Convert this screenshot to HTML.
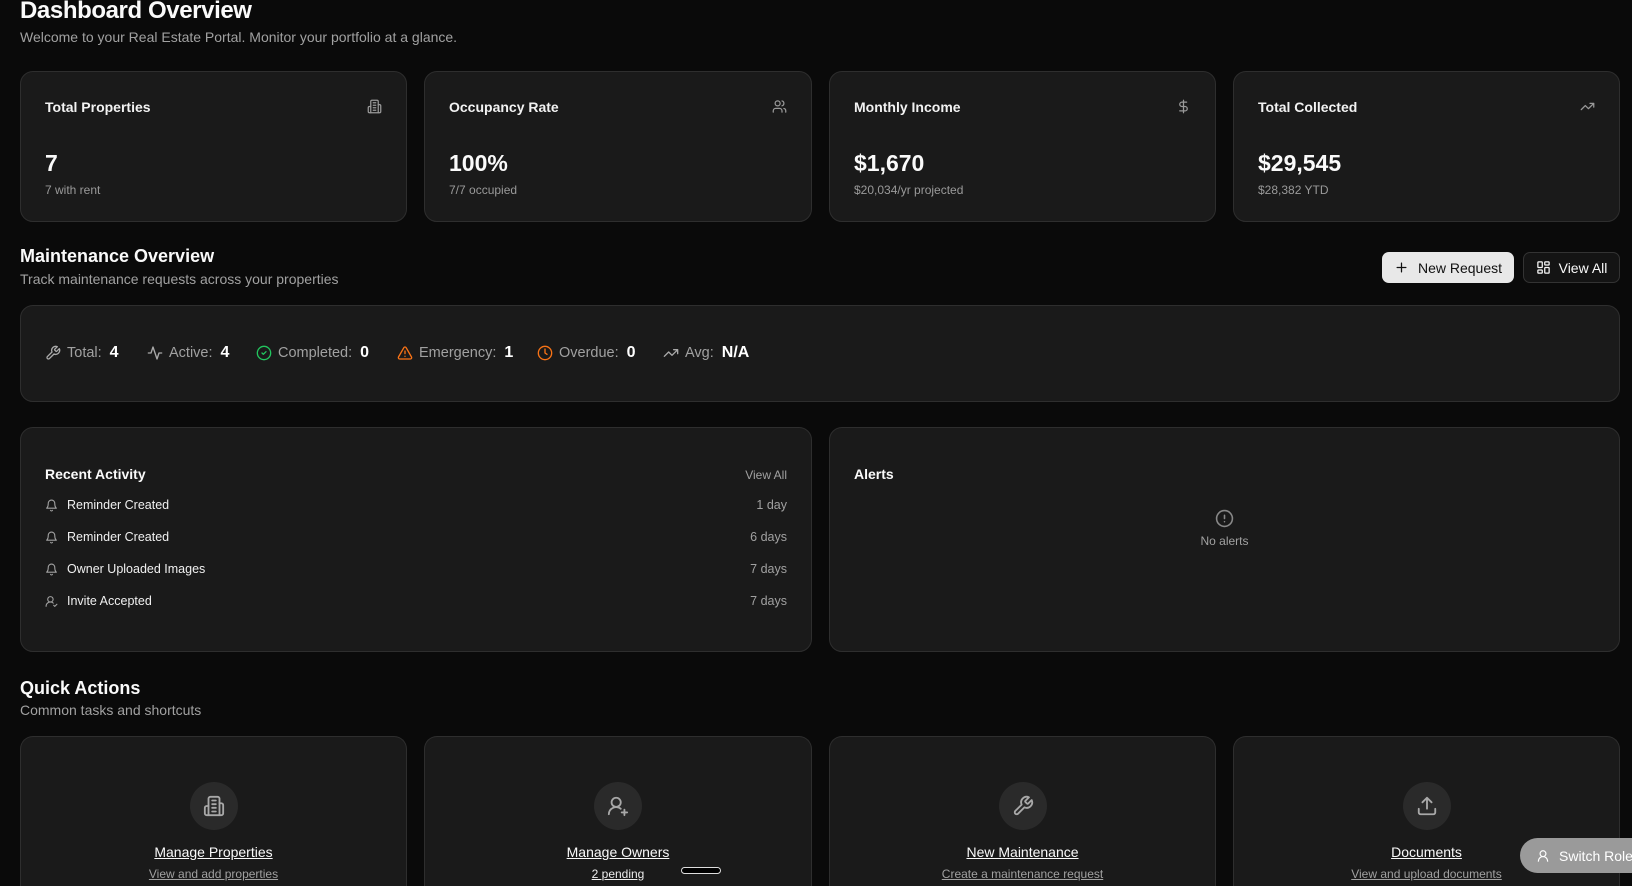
<!DOCTYPE html>
<html><head><meta charset="utf-8"><style>
*{box-sizing:border-box;margin:0;padding:0}
html{width:1632px;height:886px;overflow:hidden}
body{width:1632px;height:886px;overflow:hidden;background:#0a0a0a;color:#fafafa;font-family:"Liberation Sans",sans-serif;position:relative}
.abs{position:absolute}
.card{position:absolute;background:#1a1a1a;border:1px solid #2e2e2e;border-radius:13px}
.h1{left:20px;top:-3px;font-size:24px;font-weight:bold;letter-spacing:-0.4px}
.sub{color:#a1a1a1;font-size:14px}
.ct{position:absolute;left:24px;top:27px;font-size:14px;font-weight:bold;color:#f2f2f2}
.ci{position:absolute;right:24px;top:27px}
.cv{position:absolute;left:24px;top:78px;font-size:23px;font-weight:bold}
.cs{position:absolute;left:24px;top:111px;font-size:12px;color:#9a9a9a}
.h2{font-size:18px;font-weight:bold}
svg{fill:none;stroke:currentColor;stroke-width:2;stroke-linecap:round;stroke-linejoin:round}
.st{position:absolute;top:344px;font-size:14.5px;color:#a1a1a1;display:flex;align-items:center;gap:6px}
.st b{color:#fff;font-size:16px;margin-left:2px}
.row{position:absolute;left:24px;right:24px;font-size:12.5px;color:#f0f0f0;display:flex;align-items:center}
.row span.t{margin-left:auto;color:#a1a1a1;font-weight:normal}
.row svg{color:#a1a1a1;margin-right:9px}
.qa{top:736px;height:150px;border-bottom:0;border-radius:13px 13px 0 0}
.qc{position:absolute;left:50%;top:45px;width:48px;height:48px;margin-left:-24px;border-radius:50%;background:#2a2a2a;color:#a8a8a8;display:flex;align-items:center;justify-content:center}
.qt{position:absolute;left:0;right:0;top:107px;text-align:center;font-size:14px;text-decoration:underline}
.qs{position:absolute;left:0;right:0;top:130px;text-align:center;font-size:12px;color:#a1a1a1;text-decoration:underline}
</style></head><body>
<div class="abs h1">Dashboard Overview</div>
<div class="abs sub" style="left:20px;top:29px">Welcome to your Real Estate Portal. Monitor your portfolio at a glance.</div>

<div class="card" style="left:20px;top:71px;width:387px;height:151px">
<div class="ct">Total Properties</div>
<svg class="ci" style="color:#999" width="15" height="15" viewBox="0 0 24 24"><path d="M6 22V4a2 2 0 0 1 2-2h8a2 2 0 0 1 2 2v18Z"/><path d="M6 12H4a2 2 0 0 0-2 2v6a2 2 0 0 0 2 2h2M18 9h2a2 2 0 0 1 2 2v9a2 2 0 0 1-2 2h-2M10 6h4M10 10h4M10 14h4M10 18h4"/></svg>
<div class="cv">7</div><div class="cs">7 with rent</div></div>
<div class="card" style="left:424px;top:71px;width:388px;height:151px">
<div class="ct">Occupancy Rate</div>
<svg class="ci" style="color:#999" width="15" height="15" viewBox="0 0 24 24"><path d="M16 21v-2a4 4 0 0 0-4-4H6a4 4 0 0 0-4 4v2"/><circle cx="9" cy="7" r="4"/><path d="M22 21v-2a4 4 0 0 0-3-3.87M16 3.13a4 4 0 0 1 0 7.75"/></svg>
<div class="cv">100%</div><div class="cs">7/7 occupied</div></div>
<div class="card" style="left:829px;top:71px;width:387px;height:151px">
<div class="ct">Monthly Income</div>
<svg class="ci" style="color:#999" width="15" height="15" viewBox="0 0 24 24"><path d="M12 2v20M17 5H9.5a3.5 3.5 0 0 0 0 7h5a3.5 3.5 0 0 1 0 7H6"/></svg>
<div class="cv">$1,670</div><div class="cs">$20,034/yr projected</div></div>
<div class="card" style="left:1233px;top:71px;width:387px;height:151px">
<div class="ct">Total Collected</div>
<svg class="ci" style="color:#999" width="15" height="15" viewBox="0 0 24 24"><path d="M22 7l-8.5 8.5-5-5L2 17M16 7h6v6"/></svg>
<div class="cv">$29,545</div><div class="cs">$28,382 YTD</div></div>

<div class="abs h2" style="left:20px;top:246px">Maintenance Overview</div>
<div class="abs sub" style="left:20px;top:271px">Track maintenance requests across your properties</div>
<div class="abs" style="left:1382px;top:252px;width:132px;height:31px;background:#e8e8e8;border-radius:7px;color:#111;font-size:14px;display:flex;align-items:center;justify-content:center;gap:9px"><svg width="15" height="15" viewBox="0 0 24 24"><path d="M5 12h14M12 5v14"/></svg>New Request</div>
<div class="abs" style="left:1523px;top:252px;width:97px;height:31px;background:#141414;border:1px solid #333;border-radius:7px;font-size:14px;display:flex;align-items:center;justify-content:center;gap:8px"><svg width="15" height="15" viewBox="0 0 24 24"><rect x="3" y="3" width="7" height="9" rx="1"/><rect x="14" y="3" width="7" height="5" rx="1"/><rect x="14" y="12" width="7" height="9" rx="1"/><rect x="3" y="16" width="7" height="5" rx="1"/></svg>View All</div>

<div class="card" style="left:20px;top:305px;width:1600px;height:97px"></div>
<div class="st" style="left:45px"><svg style="color:#aaa" width="16" height="16" viewBox="0 0 24 24"><path d="M14.7 6.3a1 1 0 0 0 0 1.4l1.6 1.6a1 1 0 0 0 1.4 0l3.77-3.77a6 6 0 0 1-7.94 7.94l-6.91 6.91a2.12 2.12 0 0 1-3-3l6.91-6.91a6 6 0 0 1 7.94-7.94z"/></svg>Total: <b>4</b></div>
<div class="st" style="left:147px"><svg style="color:#aaa" width="16" height="16" viewBox="0 0 24 24"><path d="M22 12h-4l-3 9L9 3l-3 9H2"/></svg>Active: <b>4</b></div>
<div class="st" style="left:256px"><svg style="color:#22c55e" width="16" height="16" viewBox="0 0 24 24"><circle cx="12" cy="12" r="10"/><path d="m9 12 2 2 4-4"/></svg>Completed: <b>0</b></div>
<div class="st" style="left:397px"><svg style="color:#f97316" width="16" height="16" viewBox="0 0 24 24"><path d="m21.73 18-8-14a2 2 0 0 0-3.48 0l-8 14A2 2 0 0 0 4 21h16a2 2 0 0 0 1.73-3Z"/><path d="M12 9v4M12 17h.01"/></svg>Emergency: <b>1</b></div>
<div class="st" style="left:537px"><svg style="color:#f97316" width="16" height="16" viewBox="0 0 24 24"><circle cx="12" cy="12" r="10"/><path d="M12 6v6l3 2"/></svg>Overdue: <b>0</b></div>
<div class="st" style="left:663px"><svg style="color:#aaa" width="16" height="16" viewBox="0 0 24 24"><path d="M22 7l-8.5 8.5-5-5L2 17M16 7h6v6"/></svg>Avg: <b>N/A</b></div>

<div class="card" style="left:20px;top:427px;width:792px;height:225px">
<div class="abs" style="left:24px;top:38px;font-size:14px;font-weight:bold">Recent Activity</div>
<div class="abs" style="right:24px;top:40px;font-size:12px;color:#a1a1a1">View All</div>
<div class="row" style="top:70px"><svg width="13" height="13" viewBox="0 0 24 24"><path d="M6 8a6 6 0 0 1 12 0c0 7 3 9 3 9H3s3-2 3-9M10.3 21a1.94 1.94 0 0 0 3.4 0"/></svg>Reminder Created<span class="t">1 day</span></div>
<div class="row" style="top:102px"><svg width="13" height="13" viewBox="0 0 24 24"><path d="M6 8a6 6 0 0 1 12 0c0 7 3 9 3 9H3s3-2 3-9M10.3 21a1.94 1.94 0 0 0 3.4 0"/></svg>Reminder Created<span class="t">6 days</span></div>
<div class="row" style="top:134px"><svg width="13" height="13" viewBox="0 0 24 24"><path d="M6 8a6 6 0 0 1 12 0c0 7 3 9 3 9H3s3-2 3-9M10.3 21a1.94 1.94 0 0 0 3.4 0"/></svg>Owner Uploaded Images<span class="t">7 days</span></div>
<div class="row" style="top:166px"><svg width="13" height="13" viewBox="0 0 24 24"><path d="M2 21a8 8 0 0 1 13.3-6"/><circle cx="10" cy="8" r="5"/><path d="m16 19 2 2 4-4"/></svg>Invite Accepted<span class="t">7 days</span></div>
</div>
<div class="card" style="left:829px;top:427px;width:791px;height:225px">
<div class="abs" style="left:24px;top:38px;font-size:14px;font-weight:bold">Alerts</div>
<svg class="abs" style="left:385px;top:81px;color:#888" width="19" height="19" viewBox="0 0 24 24"><circle cx="12" cy="12" r="10"/><path d="M12 8v4M12 16h.01"/></svg>
<div class="abs" style="left:0;right:0;top:106px;text-align:center;font-size:12px;color:#a1a1a1">No alerts</div>
</div>

<div class="abs h2" style="left:20px;top:678px">Quick Actions</div>
<div class="abs sub" style="left:20px;top:702px">Common tasks and shortcuts</div>

<div class="card qa" style="left:20px;width:387px"><div class="qc"><svg width="22" height="22" viewBox="0 0 24 24"><path d="M6 22V4a2 2 0 0 1 2-2h8a2 2 0 0 1 2 2v18Z"/><path d="M6 12H4a2 2 0 0 0-2 2v6a2 2 0 0 0 2 2h2M18 9h2a2 2 0 0 1 2 2v9a2 2 0 0 1-2 2h-2M10 6h4M10 10h4M10 14h4M10 18h4"/></svg></div><div class="qt">Manage Properties</div><div class="qs">View and add properties</div></div>
<div class="card qa" style="left:424px;width:388px"><div class="qc"><svg width="22" height="22" viewBox="0 0 24 24"><path d="M2 21a8 8 0 0 1 13-6"/><circle cx="10" cy="8" r="5"/><path d="M19 16v6M22 19h-6"/></svg></div><div class="qt">Manage Owners</div><div class="qs" style="color:#eee">2 pending</div><div class="abs" style="left:256px;top:130px;width:40px;height:7px;border:1.5px solid #ddd;border-radius:4px;background:#000"></div></div>
<div class="card qa" style="left:829px;width:387px"><div class="qc"><svg width="22" height="22" viewBox="0 0 24 24"><path d="M14.7 6.3a1 1 0 0 0 0 1.4l1.6 1.6a1 1 0 0 0 1.4 0l3.77-3.77a6 6 0 0 1-7.94 7.94l-6.91 6.91a2.12 2.12 0 0 1-3-3l6.91-6.91a6 6 0 0 1 7.94-7.94z"/></svg></div><div class="qt">New Maintenance</div><div class="qs">Create a maintenance request</div></div>
<div class="card qa" style="left:1233px;width:387px"><div class="qc"><svg width="22" height="22" viewBox="0 0 24 24"><path d="M21 15v4a2 2 0 0 1-2 2H5a2 2 0 0 1-2-2v-4M17 8l-5-5-5 5M12 3v12"/></svg></div><div class="qt">Documents</div><div class="qs">View and upload documents</div></div>

<div class="abs" style="left:1520px;top:838px;width:130px;height:35px;border-radius:18px;background:#9a9a9a;color:#fff;font-size:14px;display:flex;align-items:center;padding-left:16px;gap:9px"><svg width="14" height="14" viewBox="0 0 24 24"><circle cx="12" cy="8" r="5"/><path d="M20 21a8 8 0 0 0-16 0"/></svg>Switch Role</div>
</body></html>
